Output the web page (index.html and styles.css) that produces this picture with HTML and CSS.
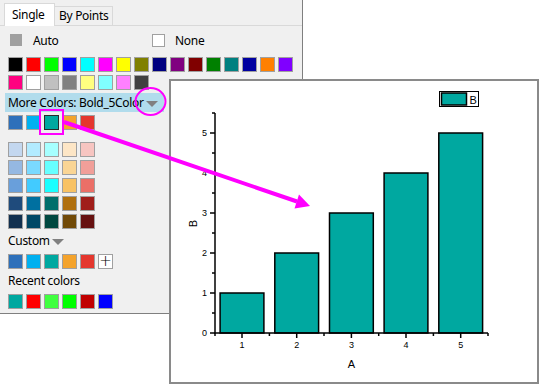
FILE: index.html
```html
<!DOCTYPE html>
<html lang="en">
<head>
    <meta charset="UTF-8">
    <title>Color Picker</title>
    <link rel="stylesheet" href="styles.css">
</head>
<body>
    <div class="panel">
        <div class="tabs">
            <div class="tab active">Single</div>
            <div class="tab">By Points</div>
        </div>
        <div class="content">
            <div class="opt-row">
                <div class="opt"><span class="auto-sw"></span>Auto</div>
                <div class="opt"><span class="check"></span>None</div>
            </div>

            <!-- basic colors -->
            <div class="swatches first">
                <span class="sw" style="background:#000000"></span>
                <span class="sw" style="background:#ff0000"></span>
                <span class="sw" style="background:#00ff00"></span>
                <span class="sw" style="background:#0000ff"></span>
                <span class="sw" style="background:#00ffff"></span>
                <span class="sw" style="background:#ff00ff"></span>
                <span class="sw" style="background:#ffff00"></span>
                <span class="sw" style="background:#808000"></span>
                <span class="sw" style="background:#000080"></span>
                <span class="sw" style="background:#800080"></span>
                <span class="sw" style="background:#800000"></span>
                <span class="sw" style="background:#008000"></span>
                <span class="sw" style="background:#008080"></span>
                <span class="sw" style="background:#0000a0"></span>
                <span class="sw" style="background:#ff8000"></span>
                <span class="sw" style="background:#8000ff"></span>
            </div>
            <div class="swatches">
                <span class="sw" style="background:#ff0080"></span>
                <span class="sw" style="background:#ffffff"></span>
                <span class="sw" style="background:#c0c0c0"></span>
                <span class="sw" style="background:#808080"></span>
                <span class="sw" style="background:#ffff80"></span>
                <span class="sw" style="background:#80ffff"></span>
                <span class="sw" style="background:#ff80ff"></span>
                <span class="sw" style="background:#404040"></span>
            </div>

            <div class="more"><span>More Colors: Bold_5Color</span><span class="tri"></span></div>

            <div class="swatches bold">
                <span class="sw" style="background:#2e70ba"></span>
                <span class="sw" style="background:#00b0f0"></span>
                <span class="sw selected" style="background:#00a8a0"></span>
                <span class="sw" style="background:#f4a32c"></span>
                <span class="sw" style="background:#e4372e"></span>
            </div>

            <div class="shades">
                <span class="sw" style="background:#c3d7ef"></span>
                <span class="sw" style="background:#b2ebff"></span>
                <span class="sw" style="background:#a6ffff"></span>
                <span class="sw" style="background:#fde6c6"></span>
                <span class="sw" style="background:#f7c5c1"></span>

                <span class="sw" style="background:#95b8e2"></span>
                <span class="sw" style="background:#7ad9ff"></span>
                <span class="sw" style="background:#66ffff"></span>
                <span class="sw" style="background:#fad594"></span>
                <span class="sw" style="background:#f19f99"></span>

                <span class="sw" style="background:#699fdb"></span>
                <span class="sw" style="background:#42cbff"></span>
                <span class="sw" style="background:#1affff"></span>
                <span class="sw" style="background:#f8c264"></span>
                <span class="sw" style="background:#eb6f67"></span>

                <span class="sw" style="background:#1f4b7c"></span>
                <span class="sw" style="background:#0070a0"></span>
                <span class="sw" style="background:#006f6b"></span>
                <span class="sw" style="background:#b0700f"></span>
                <span class="sw" style="background:#a01e1a"></span>

                <span class="sw" style="background:#12304f"></span>
                <span class="sw" style="background:#004866"></span>
                <span class="sw" style="background:#004840"></span>
                <span class="sw" style="background:#714a08"></span>
                <span class="sw" style="background:#661110"></span>
            </div>

            <div class="label">Custom<span class="tri"></span></div>
            <div class="swatches gap-6">
                <span class="sw" style="background:#2e70ba"></span>
                <span class="sw" style="background:#00b0f0"></span>
                <span class="sw" style="background:#00a8a0"></span>
                <span class="sw" style="background:#f4a32c"></span>
                <span class="sw" style="background:#e4372e"></span>
                <span class="sw plus">+</span>
            </div>

            <div class="label">Recent colors</div>
            <div class="swatches gap-6">
                <span class="sw" style="background:#00a8a0"></span>
                <span class="sw" style="background:#ff0000"></span>
                <span class="sw" style="background:#40ff40"></span>
                <span class="sw" style="background:#00ff00"></span>
                <span class="sw" style="background:#c00000"></span>
                <span class="sw" style="background:#0000ff"></span>
            </div>
        </div>
    </div>

    <!-- graph window -->
    <div class="graph">
        <svg width="366" height="301" viewBox="171 81 366 301">
            <g class="bars">
                <rect x="220.1" y="293" width="43.8" height="40"/>
                <rect x="274.8" y="253" width="43.8" height="80"/>
                <rect x="329.5" y="213" width="43.8" height="120"/>
                <rect x="384.1" y="173" width="43.8" height="160"/>
                <rect x="438.8" y="133" width="43.8" height="200"/>
            </g>
            <g class="axis">
                <line x1="215" y1="113" x2="215" y2="333.5"/>
                <line x1="214.5" y1="333" x2="488" y2="333"/>
                <!-- y ticks -->
                <line x1="210" y1="333" x2="215" y2="333"/>
                <line x1="212" y1="313" x2="215" y2="313"/>
                <line x1="210" y1="293" x2="215" y2="293"/>
                <line x1="212" y1="273" x2="215" y2="273"/>
                <line x1="210" y1="253" x2="215" y2="253"/>
                <line x1="212" y1="233" x2="215" y2="233"/>
                <line x1="210" y1="213" x2="215" y2="213"/>
                <line x1="212" y1="193" x2="215" y2="193"/>
                <line x1="210" y1="173" x2="215" y2="173"/>
                <line x1="212" y1="153" x2="215" y2="153"/>
                <line x1="210" y1="133" x2="215" y2="133"/>
                <line x1="212" y1="113" x2="215" y2="113"/>
                <!-- x ticks -->
                <line x1="215" y1="333" x2="215" y2="336"/>
                <line x1="242" y1="333" x2="242" y2="338"/>
                <line x1="269.4" y1="333" x2="269.4" y2="336"/>
                <line x1="296.7" y1="333" x2="296.7" y2="338"/>
                <line x1="324" y1="333" x2="324" y2="336"/>
                <line x1="351.4" y1="333" x2="351.4" y2="338"/>
                <line x1="378.7" y1="333" x2="378.7" y2="336"/>
                <line x1="406" y1="333" x2="406" y2="338"/>
                <line x1="433.4" y1="333" x2="433.4" y2="336"/>
                <line x1="460.7" y1="333" x2="460.7" y2="338"/>
                <line x1="488" y1="333" x2="488" y2="336"/>
            </g>
            <g class="ylabels">
                <text x="207" y="336">0</text>
                <text x="207" y="296">1</text>
                <text x="207" y="256">2</text>
                <text x="207" y="216">3</text>
                <text x="207" y="176">4</text>
                <text x="207" y="136">5</text>
            </g>
            <g class="xlabels">
                <text x="242" y="348">1</text>
                <text x="296.7" y="348">2</text>
                <text x="351.4" y="348">3</text>
                <text x="406" y="348">4</text>
                <text x="460.7" y="348">5</text>
            </g>
            <text class="title" x="351.4" y="368">A</text>
            <text class="title" x="197" y="223.5" transform="rotate(-90 197 223.5)">B</text>

            <!-- legend -->
            <rect class="legend" x="439.5" y="91.5" width="39" height="15"/>
            <rect class="legend-sw" x="441.5" y="93" width="25" height="12"/>
            <text class="legend-text" x="469.5" y="103.5">B</text>
        </svg>
    </div>

    <!-- annotation marks -->
    <svg class="marks" width="548" height="390">
        <ellipse cx="150.5" cy="101.5" rx="15" ry="13.5"/>
        <rect x="40" y="110" width="23" height="24"/>
        <line x1="64" y1="122" x2="297" y2="201.5"/>
        <polygon points="310,206 294.5,208.5 299,194.5"/>
    </svg>
</body>
</html>
```

FILE: styles.css
```css
/* base */
body {
    margin: 0;
    background: #ffffff;
    font-family: "Noto Sans", "Open Sans", sans-serif;
    font-size: 12px;
    color: #000;
    width: 548px;
    height: 390px;
    overflow: hidden;
    position: relative;
}

/* color panel */
.panel {
    width: 302px;
    height: 313px;
    background: #f0f0f0;
    border-right: 1px solid #7f7f7f;
    border-bottom: 1px solid #7f7f7f;
    letter-spacing: -0.3px;
    white-space: nowrap;
}

.tabs {
    display: flex;
    align-items: flex-end;
    height: 25px;
    padding-left: 4px;
}

.tab {
    box-sizing: border-box;
    height: 19px;
    padding: 0 4px;
    line-height: 17px;
    border: 1px solid #d9d9d9;
    border-bottom: none;
    margin-left: -1px;
}

.tab.active {
    height: 23px;
    width: 51px;
    line-height: 21px;
    padding: 0 7px;
    background: #ffffff;
    margin-left: 0;
    margin-bottom: -1px;
    position: relative;
}

.content {
    border-top: 1px solid #d9d9d9;
    padding: 8px 0 0 8px;
}

.opt-row {
    display: flex;
    height: 12px;
}

.opt {
    display: flex;
    align-items: center;
    width: 144px;
}

.auto-sw {
    width: 12px;
    height: 12px;
    background: #a0a0a0;
    margin: 0 11px 0 2px;
}

.check {
    box-sizing: border-box;
    width: 13px;
    height: 13px;
    background: #fff;
    border: 1px solid #a0a0a0;
    margin-right: 10px;
}

/* swatch rows */
.swatches {
    display: flex;
    gap: 3px;
    margin-top: 3px;
}

.swatches.first {
    margin-top: 11px;
}

.swatches.bold {
    margin-top: 3px;
}

.swatches.gap-6 {
    margin-top: 6px;
}

.sw {
    box-sizing: border-box;
    width: 15px;
    height: 15px;
    border: 1px solid #a0a0a0;
}

.sw.selected {
    border-color: #2a2a2a;
}

.sw.plus {
    display: flex;
    align-items: center;
    justify-content: center;
    background: #ffffff;
    font-family: "DejaVu Sans", sans-serif;
    font-size: 15px;
    font-weight: 300;
    line-height: 1;
    letter-spacing: 0;
    padding-bottom: 1px;
}

.shades {
    display: grid;
    grid-template-columns: repeat(5, 15px);
    gap: 3px;
    margin-top: 12px;
}

.more {
    display: flex;
    align-items: center;
    margin: 3px 0 0 -3px;
    padding-left: 3px;
    width: 156px;
    height: 19px;
    background: #b1dcec;
}

.tri {
    flex: none;
    width: 0;
    height: 0;
    border-left: 6px solid transparent;
    border-right: 6px solid transparent;
    border-top: 6px solid #808080;
    margin: 3px 0 0 2px;
}

.label {
    display: flex;
    align-items: center;
    height: 16px;
    margin-top: 3px;
}

/* graph window */
.graph {
    position: absolute;
    left: 169px;
    top: 79px;
    width: 370px;
    height: 305px;
    box-sizing: border-box;
    border: 2px solid #8a8a8a;
    background: #ffffff;
}

.graph svg {
    display: block;
}

.bars rect {
    fill: #00a8a0;
    stroke: #000;
    stroke-width: 1.5;
}

.axis line {
    stroke: #000;
    stroke-width: 1.5;
}

.ylabels text,
.xlabels text {
    font-family: "Liberation Sans", Arial, sans-serif;
    font-size: 9px;
}

.ylabels text {
    text-anchor: end;
}

.xlabels text {
    text-anchor: middle;
}

.title {
    font-family: "Liberation Sans", Arial, sans-serif;
    font-size: 11px;
    text-anchor: middle;
}

.legend {
    fill: #fff;
    stroke: #000;
    stroke-width: 1;
}

.legend-sw {
    fill: #00a8a0;
    stroke: #000;
    stroke-width: 1.5;
}

.legend-text {
    font-family: "Liberation Sans", Arial, sans-serif;
    font-size: 11px;
}

/* magenta annotations */
.marks {
    position: absolute;
    left: 0;
    top: 0;
    pointer-events: none;
}

.marks ellipse,
.marks rect {
    fill: none;
    stroke: #ff00ff;
    stroke-width: 2;
}

.marks line {
    stroke: #ff00ff;
    stroke-width: 4;
}

.marks polygon {
    fill: #ff00ff;
}
```
